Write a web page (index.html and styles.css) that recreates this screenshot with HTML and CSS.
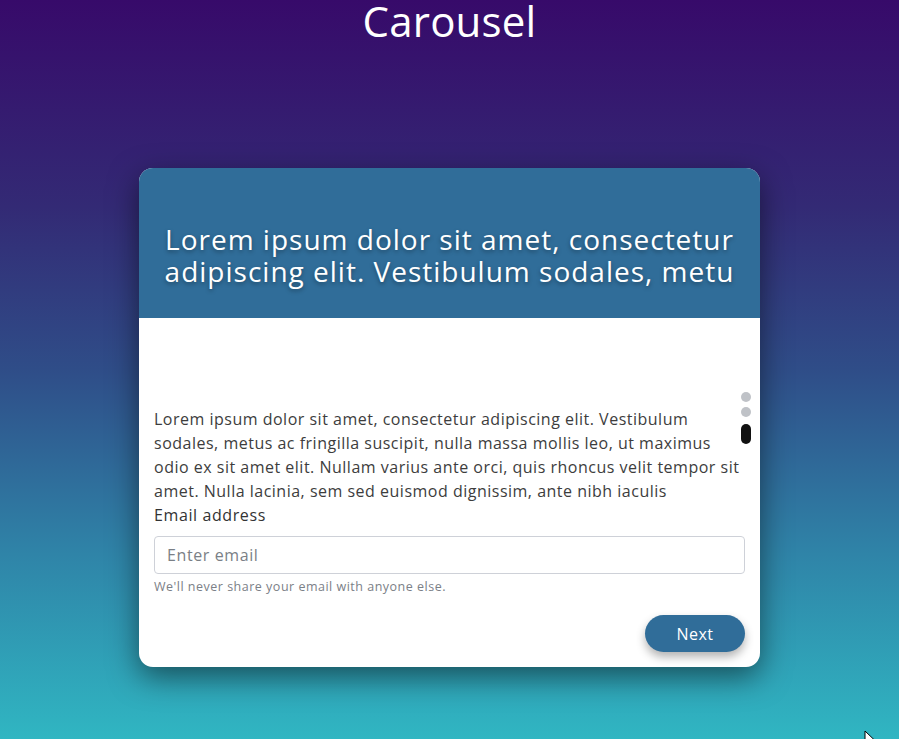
FILE: index.html
```html
<!DOCTYPE html>
<html lang="en">
<head>
<meta charset="utf-8">
<title>Carousel</title>
<link rel="stylesheet" href="styles.css">
</head>
<body>
<div class="page">
  <h1 class="title">Carousel</h1>
  <div class="card">
    <div class="card-head">
      <h2 class="card-title">Lorem ipsum dolor sit amet, consectetur adipiscing elit. Vestibulum sodales, metu</h2>
    </div>
    <div class="card-body">
      <div class="dots">
        <span class="dot"></span>
        <span class="dot"></span>
        <span class="dot active"></span>
      </div>
      <p class="text">Lorem ipsum dolor sit amet, consectetur adipiscing elit. Vestibulum sodales, metus ac fringilla suscipit, nulla massa mollis leo, ut maximus odio ex sit amet elit. Nullam varius ante orci, quis rhoncus velit tempor sit amet. Nulla lacinia, sem sed euismod dignissim, ante nibh iaculis</p>
      <label class="label" for="email">Email address</label>
      <input class="input" id="email" type="email" placeholder="Enter email">
      <small class="help">We'll never share your email with anyone else.</small>
      <div class="actions">
        <button class="btn" type="button">Next</button>
      </div>
    </div>
  </div>
</div>
<svg class="cursor" width="14" height="20" viewBox="0 0 14 20" aria-hidden="true">
  <path d="M1 1 L1 16 L4.5 12.5 L7 18.5 L9.5 17.5 L7 11.5 L12 11.5 Z" fill="#fff" stroke="#000" stroke-width="1" stroke-linejoin="round"/>
</svg>
</body>
</html>
```
FILE: styles.css
```css
html, body {
  margin: 0;
  padding: 0;
  height: 100%;
}
body {
  position: relative;
  font-family: "Open Sans", "Liberation Sans", sans-serif;
  background: linear-gradient(180deg, #370a6a 0%, #332a75 28%, #2f4d88 50%, #2f84a8 75%, #30b6c2 100%);
  min-height: 739px;
  overflow: hidden;
}
.page {
  display: flex;
  flex-direction: column;
  align-items: center;
}
.title {
  margin: 0;
  font-size: 42px;
  line-height: 42px;
  font-weight: 400;
  color: #fff;
  letter-spacing: 0.2px;
}
.card {
  margin-top: 126px;
  width: 621px;
  border-radius: 14px;
  overflow: hidden;
  background: #fff;
  box-shadow: 0 10px 30px rgba(0, 0, 0, 0.5);
}
.card-head {
  background: #306d99;
  height: 150px;
  box-sizing: border-box;
  padding: 55px 10px 0;
}
.card-title {
  margin: 0;
  text-align: center;
  color: #fff;
  font-size: 28px;
  line-height: 32px;
  font-weight: 400;
  letter-spacing: 1px;
  text-shadow: 0 2px 4px rgba(0, 0, 0, 0.35);
}
.card-body {
  position: relative;
  padding: 89px 15px 15px;
  display: flex;
  flex-direction: column;
}
.dots {
  position: absolute;
  right: 9px;
  top: 74px;
  display: flex;
  flex-direction: column;
  gap: 5px;
}
.dot {
  width: 10px;
  height: 10px;
  border-radius: 5px;
  background: #bfc2c7;
}
.dot.active {
  height: 20px;
  margin-top: 2px;
  background: #111;
}
.text {
  margin: 0;
  font-size: 16px;
  line-height: 24px;
  letter-spacing: 0.5px;
  color: #3d3d3d;
}
.label {
  font-size: 16px;
  line-height: 24px;
  letter-spacing: 0.6px;
  color: #333;
  margin-bottom: 9px;
}
.input {
  height: 38px;
  box-sizing: border-box;
  border: 1px solid #ced1d8;
  border-radius: 4px;
  padding: 0 12px;
  font-family: inherit;
  font-size: 16px;
  letter-spacing: 0.6px;
  color: #495057;
  outline: none;
}
.input::placeholder {
  color: #7a7f86;
}
.help {
  margin-top: 4px;
  font-size: 12.5px;
  line-height: 18px;
  letter-spacing: 0.5px;
  color: #7b8087;
}
.actions {
  display: flex;
  justify-content: flex-end;
  margin-top: 19px;
}
.btn {
  width: 100px;
  height: 37px;
  border: 0;
  border-radius: 19px;
  background: #306d99;
  color: #fff;
  font-family: inherit;
  font-size: 16px;
  letter-spacing: 0.5px;
  box-shadow: 0 5px 10px rgba(0, 0, 0, 0.3);
}
.cursor {
  position: absolute;
  left: 864px;
  top: 730px;
}
```
